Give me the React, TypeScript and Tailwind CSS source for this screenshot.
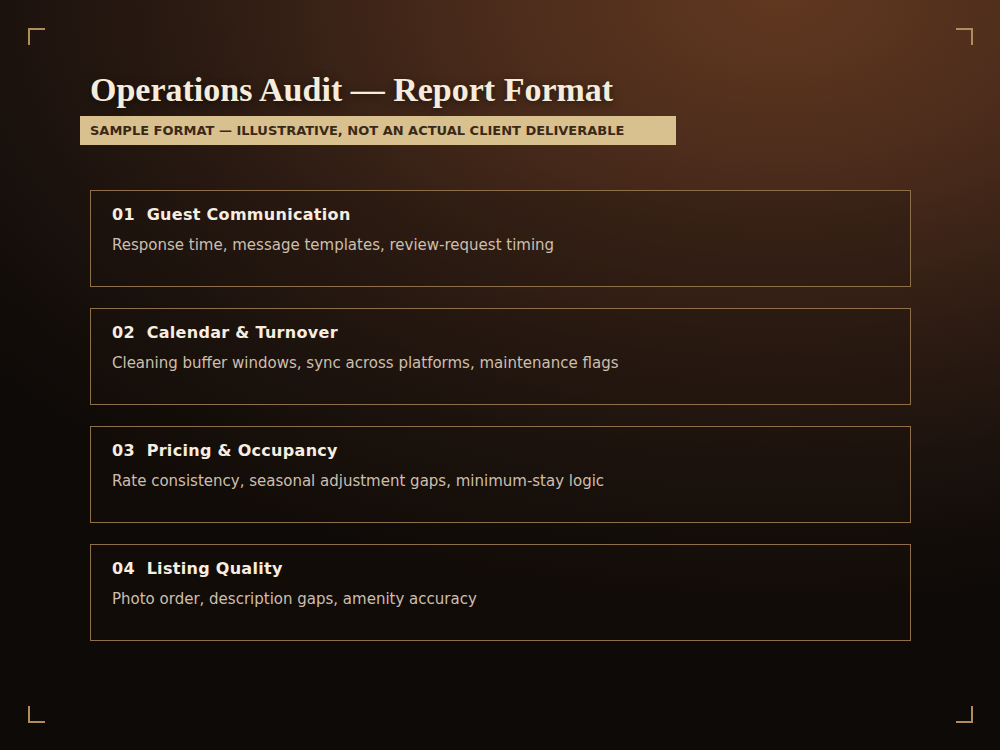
import React from "react";

const items = [
  { n: "01", title: "Guest Communication", desc: "Response time, message templates, review-request timing" },
  { n: "02", title: "Calendar & Turnover", desc: "Cleaning buffer windows, sync across platforms, maintenance flags" },
  { n: "03", title: "Pricing & Occupancy", desc: "Rate consistency, seasonal adjustment gaps, minimum-stay logic" },
  { n: "04", title: "Listing Quality", desc: "Photo order, description gaps, amenity accuracy" },
];

const sans = { fontFamily: '"DejaVu Sans", sans-serif' };
const serif = { fontFamily: '"Liberation Serif", serif' };

export default function App() {
  return (
    <div
      style={sans}
      className="relative w-[1000px] h-[750px] overflow-hidden bg-[radial-gradient(ellipse_100%_80%_at_78%_0%,#613820_0%,#4a2b1b_30%,#2a1a12_60%,#160f0b_85%,#0e0a07_100%)]"
    >
      {/* corner marks */}
      <div className="absolute left-[28px] top-[28px] w-[17px] h-[17px] border-l-2 border-t-2 border-[#b08d5a]" />
      <div className="absolute right-[27px] top-[28px] w-[17px] h-[17px] border-r-2 border-t-2 border-[#b08d5a]" />
      <div className="absolute left-[28px] bottom-[27px] w-[17px] h-[17px] border-l-2 border-b-2 border-[#b08d5a]" />
      <div className="absolute right-[27px] bottom-[27px] w-[17px] h-[17px] border-r-2 border-b-2 border-[#b08d5a]" />

      <div className="pt-[70px] pl-[90px] pr-[89px]">
        <h1
          style={serif}
          className="font-bold text-[34px] leading-[40px] text-[#f6ecdc] [text-shadow:0_2px_8px_rgba(0,0,0,0.5)]"
        >
          Operations Audit — Report Format
        </h1>
        <div className="mt-[6px] -ml-[10px] w-[596px] h-[29px] bg-[#d8c08f] pl-[10px] flex items-center">
          <span className="text-[13px] font-bold text-[#3b2917]">
            SAMPLE FORMAT — ILLUSTRATIVE, NOT AN ACTUAL CLIENT DELIVERABLE
          </span>
        </div>

        <div className="mt-[45px] flex flex-col gap-[21px]">
          {items.map((it) => (
            <div key={it.n} className="h-[97px] border border-[#8d7049] bg-[rgba(30,20,14,0.3)] px-[21px] pt-[14px]">
              <div className="text-[16px] font-bold text-[#f7ede0] leading-[20px] tracking-[0.3px]">
                {it.n}&nbsp;&nbsp;{it.title}
              </div>
              <div className="mt-[10px] text-[15px] text-[#cdbfae] leading-[20px]">{it.desc}</div>
            </div>
          ))}
        </div>
      </div>
    </div>
  );
}
